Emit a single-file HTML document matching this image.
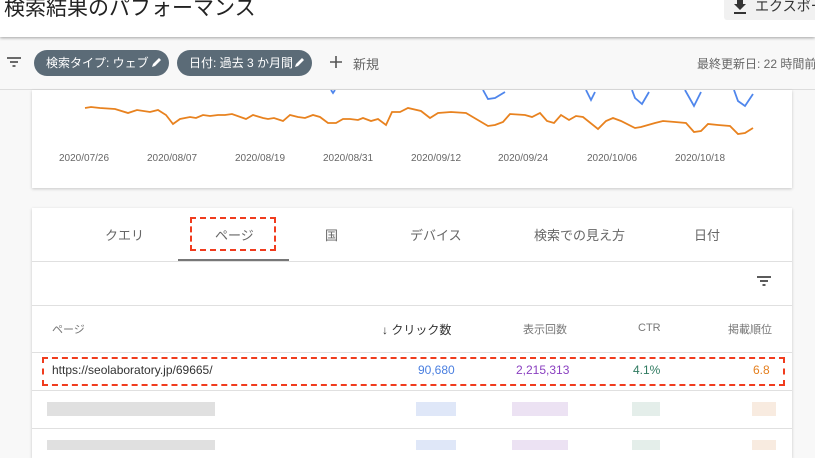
<!DOCTYPE html><html><head><meta charset="utf-8"><style>
*{margin:0;padding:0;box-sizing:border-box}
body{width:815px;height:448px;overflow:hidden;background:#f8f8f8;font-family:"Liberation Sans","Noto Sans CJK JP",sans-serif;position:relative;color:#333}
.a{position:absolute;white-space:nowrap}
.hdr{left:0;top:0;width:815px;height:37px;background:#fff;box-shadow:0 1px 3px rgba(0,0,0,.35)}
.chip{height:26px;border-radius:13px;background:#5b6b77;color:#fff;font-size:12px;line-height:26px;padding-left:12px}
.card{background:#fff;box-shadow:0 1px 3px rgba(0,0,0,.2)}
.d{font-size:10px;color:#666;top:153px}
.tab{font-size:13px;color:#666;top:225px}
.th{font-size:11px;color:#777;top:321px}
.td{font-size:12px;top:363px}
.line{height:1px;background:#e0e0e0;left:32px;width:760px}
</style></head><body>
<div class="a hdr"></div>
<div class="a" style="left:4px;top:-8px;font-size:21px;color:#222">検索結果のパフォーマンス</div>
<div class="a" style="left:724px;top:0;width:91px;height:20px;background:#f1f1f1;border-radius:0 0 0 3px"></div>
<svg class="a" style="left:733px;top:0" width="14" height="14" viewBox="0 0 14 14"><path d="M4 0h6v4h3L7 10 1 4h3z M1 12h12v2H1z" fill="#333"/></svg>
<div class="a" style="left:755px;top:-4px;font-size:14px;color:#333">エクスポート</div>
<svg class="a" style="left:7px;top:57px" width="14" height="10"><path d="M0 1h14M3 5h8M5.5 9h3" stroke="#555" stroke-width="1.8"/></svg>
<div class="a chip" style="left:34px;top:50px;width:135px">検索タイプ: ウェブ</div>
<div class="a chip" style="left:177px;top:50px;width:135px">日付: 過去 3 か月間</div>
<svg class="a" style="left:151px;top:57px" width="11" height="11"><path d="M1 10l1-3 6-6 2 2-6 6z" fill="#fff"/></svg>
<svg class="a" style="left:294px;top:57px" width="11" height="11"><path d="M1 10l1-3 6-6 2 2-6 6z" fill="#fff"/></svg>
<svg class="a" style="left:330px;top:56px" width="12" height="12"><path d="M6 0v12M0 6h12" stroke="#555" stroke-width="1.6"/></svg>
<div class="a" style="left:353px;top:54px;font-size:13px;color:#666">新規</div>
<div class="a" style="left:697px;top:55px;font-size:12px;color:#666">最終更新日: 22 時間前</div>
<div class="a" style="left:0;top:89px;width:815px;height:1px;background:#ddd"></div>
<div class="a card" style="left:32px;top:90px;width:760px;height:98px"></div>
<svg class="a" style="left:0;top:90px" width="815" height="60" viewBox="0 90 815 60">
<g fill="none" stroke-width="1.8">
<path stroke="#4f86ec" d="M331 90l2 3 2-3M483 90l5 9 7-1 10-6M586 90l5 10 4-8M632 90l3 8 7 6 7-12M685 90l9 16 7-14M734 90l4 11 7 5 8-12"/>
<polyline stroke="#e8821f" points="85,108 91,107 100,108 115,109 128,113 137,110 150,112 158,110 166,115 173,124 180,119 190,117 196,118 203,115 210,116 218,115 225,115 232,114 246,119 253,115 263,118 268,119 274,118 283,121 290,115 298,117 305,118 313,115 320,117 328,123 336,123 343,119 350,119 358,120 363,118 371,121 378,119 386,125 392,112 400,112 408,108 421,111 430,118 438,113 451,112 466,113 488,126 495,125 503,122 510,114 525,115 532,117 540,113 547,121 554,123 561,115 569,120 576,116 583,117 598,129 606,121 613,118 621,121 635,128 641,127 655,123 663,121 675,122 686,123 694,132 701,131 708,124 718,125 730,126 738,134 745,133 753,128"/>
</g></svg>
<div class="a d" style="left:59px">2020/07/26</div>
<div class="a d" style="left:147px">2020/08/07</div>
<div class="a d" style="left:235px">2020/08/19</div>
<div class="a d" style="left:323px">2020/08/31</div>
<div class="a d" style="left:411px">2020/09/12</div>
<div class="a d" style="left:498px">2020/09/24</div>
<div class="a d" style="left:587px">2020/10/06</div>
<div class="a d" style="left:675px">2020/10/18</div>
<div class="a card" style="left:32px;top:208px;width:760px;height:250px"></div>
<div class="a tab" style="left:105px">クエリ</div>
<div class="a tab" style="left:215px">ページ</div>
<div class="a tab" style="left:325px">国</div>
<div class="a tab" style="left:410px">デバイス</div>
<div class="a tab" style="left:534px">検索での見え方</div>
<div class="a tab" style="left:694px">日付</div>
<div class="a" style="left:190px;top:217px;width:86px;height:34px;border:2px dashed #f03c1e"></div>
<div class="a" style="left:178px;top:259px;width:111px;height:3px;background:#777"></div>
<div class="a line" style="top:261px"></div>
<svg class="a" style="left:757px;top:276px" width="14" height="10"><path d="M0 1h14M3 5h8M5.5 9h3" stroke="#444" stroke-width="1.8"/></svg>
<div class="a line" style="top:305px"></div>
<div class="a th" style="left:52px">ページ</div>
<div class="a th" style="left:382px;color:#333;font-size:12px">↓ クリック数</div>
<div class="a th" style="left:523px">表示回数</div>
<div class="a th" style="left:638px;top:322px">CTR</div>
<div class="a th" style="left:728px">掲載順位</div>
<div class="a line" style="top:352px"></div>
<div class="a td" style="left:52px;color:#333">https://seolaboratory.jp/69665/</div>
<div class="a td" style="left:418px;color:#4a7fe0">90,680</div>
<div class="a td" style="left:516px;color:#8a3fc0">2,215,313</div>
<div class="a td" style="left:633px;color:#2f7a60">4.1%</div>
<div class="a td" style="left:753px;color:#e47f1e">6.8</div>
<div class="a" style="left:42px;top:357px;width:743px;height:29px;border:2px dashed #f03c1e"></div>
<div class="a line" style="top:390px"></div>
<div class="a" style="left:47px;top:402px;width:168px;height:14px;background:#e0e0e0"></div>
<div class="a" style="left:416px;top:402px;width:40px;height:14px;background:#dfe7f8"></div>
<div class="a" style="left:512px;top:402px;width:56px;height:14px;background:#ece2f3"></div>
<div class="a" style="left:632px;top:402px;width:28px;height:14px;background:#e4eeea"></div>
<div class="a" style="left:752px;top:402px;width:24px;height:14px;background:#f8ebe0"></div>
<div class="a line" style="top:428px"></div>
<div class="a" style="left:47px;top:440px;width:168px;height:10px;background:#e0e0e0"></div>
<div class="a" style="left:416px;top:440px;width:40px;height:10px;background:#dfe7f8"></div>
<div class="a" style="left:512px;top:440px;width:56px;height:10px;background:#ece2f3"></div>
<div class="a" style="left:632px;top:440px;width:28px;height:10px;background:#e4eeea"></div>
<div class="a" style="left:752px;top:440px;width:24px;height:10px;background:#f8ebe0"></div>
</body></html>
